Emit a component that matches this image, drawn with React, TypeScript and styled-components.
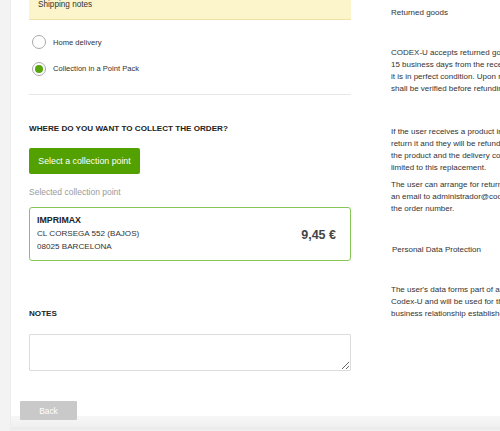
import React from "react";
import styled, { createGlobalStyle } from "styled-components";

const GlobalStyle = createGlobalStyle`
  html, body {
    margin: 0;
    padding: 0;
    width: 500px;
    height: 431px;
    overflow: hidden;
    background: #ffffff;
    font-family: "Liberation Sans", Arial, Helvetica, sans-serif;
  }
`;

const PageLayout = styled.div`
  display: flex;
  width: 500px;
  height: 431px;
  overflow: hidden;
`;

const SideStrip = styled.div`
  flex: none;
  width: 10px;
  height: 100%;
  background: #f3f3f3;
  border-right: 1px solid #ececec;
`;

const MainArea = styled.div`
  flex: 1;
  min-width: 0;
  display: flex;
  flex-direction: column;
`;

const ContentRow = styled.div`
  flex: 1;
  display: flex;
  align-items: flex-start;
  padding-left: 18px;
  overflow: hidden;
`;

const FormColumn = styled.div`
  flex: none;
  width: 322px;
  display: flex;
  flex-direction: column;
  color: #333;
`;

const Notice = styled.div`
  box-sizing: border-box;
  height: 20px;
  padding: 0 9px;
  background: #fcf5cb;
  border-bottom: 1px solid #f1e3a3;
  font-size: 8.2px;
  line-height: 10px;
  color: #333;
`;

const RadioGroup = styled.div`
  display: flex;
  flex-direction: column;
  gap: 12.7px;
  margin-top: 15px;
  padding-left: 3px;
`;

const RadioRow = styled.label`
  display: flex;
  align-items: center;
  gap: 7px;
  height: 14px;
  font-size: 7.6px;
  color: #333;
`;

const RadioCircle = styled.span<{ $checked?: boolean }>`
  box-sizing: border-box;
  width: 14px;
  height: 14px;
  border-radius: 50%;
  border: 1px solid #a9a9a9;
  background: #fff;
  display: flex;
  align-items: center;
  justify-content: center;

  &::after {
    content: "";
    display: ${(p) => (p.$checked ? "block" : "none")};
    width: 8px;
    height: 8px;
    border-radius: 50%;
    background: #58a50c;
  }
`;

const Divider = styled.hr`
  margin: 18.5px 0 0;
  border: none;
  border-top: 1px solid #e6e6e6;
`;

const SectionTitle = styled.h3<{ $top: number }>`
  margin: ${(p) => p.$top}px 0 0;
  font-size: 8.1px;
  line-height: 11px;
  font-weight: bold;
  color: #222;
  text-transform: uppercase;
`;

const GreenButton = styled.button`
  align-self: flex-start;
  box-sizing: border-box;
  width: 111px;
  height: 25.5px;
  margin-top: 14.5px;
  padding: 0;
  border: none;
  border-radius: 2px;
  background: #53a100;
  color: #fff;
  font-family: inherit;
  font-size: 8.8px;
`;

const MutedLabel = styled.div`
  margin-top: 13.5px;
  font-size: 8.5px;
  line-height: 11px;
  color: #9a9a9a;
`;

const PointCard = styled.div`
  box-sizing: border-box;
  height: 54px;
  margin-top: 8.5px;
  padding: 6px 14px 0 7px;
  border: 1.5px solid #86c657;
  border-radius: 3px;
  display: flex;
  align-items: flex-start;
  justify-content: space-between;
`;

const PointInfo = styled.div`
  display: flex;
  flex-direction: column;
  font-size: 8.1px;
  line-height: 13.3px;
  color: #333;
`;

const PointName = styled.span`
  font-weight: bold;
  font-size: 8.8px;
  color: #222;
`;

const Price = styled.div`
  margin-top: 14px;
  font-size: 12.5px;
  font-weight: bold;
  color: #444;
`;

const NotesArea = styled.textarea`
  box-sizing: border-box;
  height: 37.5px;
  margin-top: 14.5px;
  border: 1px solid #dcdcdc;
  border-radius: 1px;
  resize: vertical;
  font-family: inherit;
`;

const InfoColumn = styled.div`
  flex: none;
  margin-left: 39px;
  padding-left: 1px;
  color: #333;
  font-size: 8px;
  line-height: 12px;
  white-space: nowrap;
`;

const InfoHeading = styled.div<{ $top: number; $indent?: number }>`
  margin-top: ${(p) => p.$top}px;
  padding-left: ${(p) => p.$indent ?? 0}px;
`;

const InfoParagraph = styled.p<{ $top: number }>`
  margin: ${(p) => p.$top}px 0 0;

  > span {
    display: block;
  }
`;

const Footer = styled.div`
  flex: none;
  height: 30px;
  padding-left: 9px;
  display: flex;
  align-items: flex-start;
  background: linear-gradient(
    to bottom,
    #ffffff 0,
    #ffffff 14.5px,
    #f7f7f7 15px,
    #efefef 26px,
    #e9e9e9 27px,
    #f1f1f1 100%
  );
`;

const BackButton = styled.button`
  box-sizing: border-box;
  width: 57px;
  height: 19px;
  padding: 0;
  border: none;
  border-radius: 1px;
  background: #c9c9c9;
  color: #fff;
  font-family: inherit;
  font-size: 8.4px;
`;

const infoBlocks = [
  {
    top: 28.3,
    lines: [
      "CODEX-U accepts returned goods within a period of",
      "15 business days from the receipt of the order, provided",
      "it is in perfect condition. Upon receipt, the condition",
      "shall be verified before refunding the amount paid.",
    ],
  },
  {
    top: 30.4,
    lines: [
      "If the user receives a product in poor condition, they may",
      "return it and they will be refunded the cost of",
      "the product and the delivery costs, the liability being",
      "limited to this replacement.",
    ],
  },
  {
    top: 5.3,
    lines: [
      "The user can arrange for return by sending",
      "an email to administrador@codex-u.com indicating",
      "the order number.",
    ],
  },
];

const App = () => {
  return (
    <>
      <GlobalStyle />
      <PageLayout>
        <SideStrip />
        <MainArea>
          <ContentRow>
            <FormColumn>
              <Notice>Shipping notes</Notice>

              <RadioGroup>
                <RadioRow>
                  <RadioCircle />
                  Home delivery
                </RadioRow>
                <RadioRow>
                  <RadioCircle $checked />
                  Collection in a Point Pack
                </RadioRow>
              </RadioGroup>

              <Divider />

              <SectionTitle $top={27.5}>Where do you want to collect the order?</SectionTitle>
              <GreenButton>Select a collection point</GreenButton>

              <MutedLabel>Selected collection point</MutedLabel>
              <PointCard>
                <PointInfo>
                  <PointName>IMPRIMAX</PointName>
                  <span>CL CORSEGA 552 (BAJOS)</span>
                  <span>08025 BARCELONA</span>
                </PointInfo>
                <Price>9,45 €</Price>
              </PointCard>

              <SectionTitle $top={47.8}>Notes</SectionTitle>
              <NotesArea />
            </FormColumn>

            <InfoColumn>
              <InfoHeading $top={7}>Returned goods</InfoHeading>
              {infoBlocks.map((block, i) => (
                <InfoParagraph key={i} $top={block.top}>
                  {block.lines.map((line) => (
                    <span key={line}>{line}</span>
                  ))}
                </InfoParagraph>
              ))}
              <InfoHeading $top={29} $indent={1}>Personal Data Protection</InfoHeading>
              <InfoParagraph $top={28}>
                <span>The user's data forms part of a file owned by</span>
                <span>Codex-U and will be used for the management of the</span>
                <span>business relationship established with the user.</span>
              </InfoParagraph>
            </InfoColumn>
          </ContentRow>

          <Footer>
            <BackButton>Back</BackButton>
          </Footer>
        </MainArea>
      </PageLayout>
    </>
  );
};

export default App;
